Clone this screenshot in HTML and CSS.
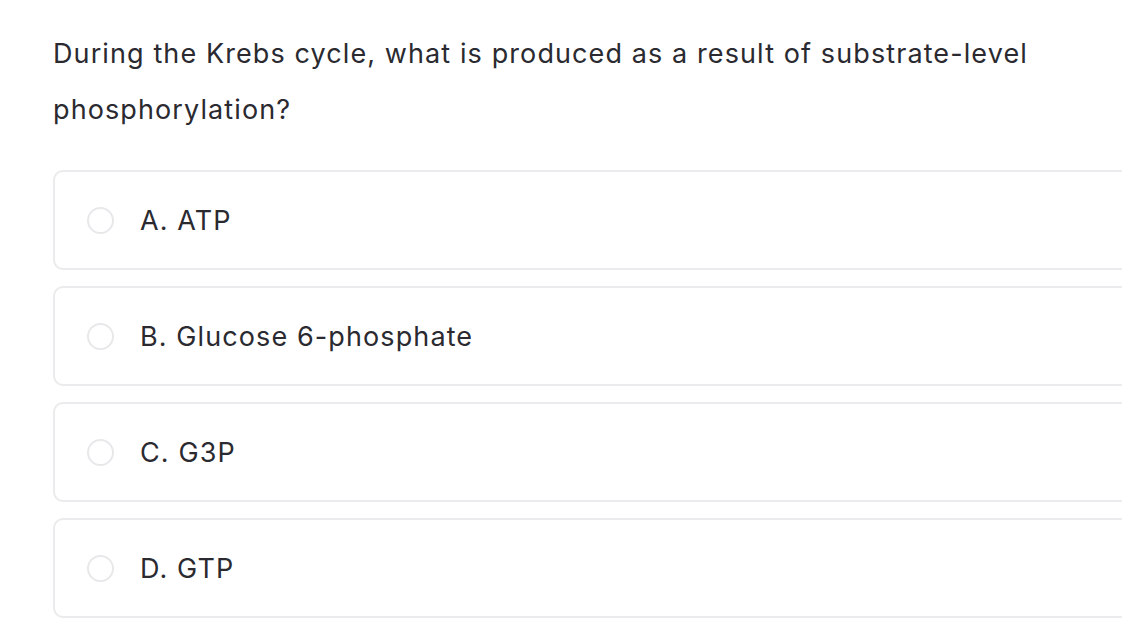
FILE: index.html
```html
<!DOCTYPE html>
<html>
<head>
<meta charset="utf-8">
<link rel="stylesheet" href="styles.css">
</head>
<body>
<div class="quiz">
  <p class="question">During the Krebs cycle, what is produced as a result of substrate-level phosphorylation?</p>
  <div class="options">
    <label class="option"><span class="radio"></span><span class="text">A. ATP</span></label>
    <label class="option"><span class="radio"></span><span class="text">B. Glucose 6-phosphate</span></label>
    <label class="option"><span class="radio"></span><span class="text">C. G3P</span></label>
    <label class="option"><span class="radio"></span><span class="text">D. GTP</span></label>
  </div>
</div>
</body>
</html>
```
FILE: styles.css
```css
html, body {
  margin: 0;
  padding: 0;
  background: #ffffff;
  overflow: hidden;
}
body {
  font-family: "Inter", "Liberation Sans", sans-serif;
  color: #2a2a30;
}
.quiz {
  padding: 26px 0 0 53px;
  margin-right: -30px;
}
.question {
  margin: 0;
  font-size: 27px;
  line-height: 56px;
  letter-spacing: 1.1px;
  width: 1000px;
}
.options {
  margin-top: 32px;
  display: flex;
  flex-direction: column;
  gap: 16px;
}
.option {
  box-sizing: border-box;
  height: 100px;
  border: 2px solid #ebebed;
  border-radius: 10px;
  display: flex;
  align-items: center;
  padding-left: 32px;
}
.radio {
  box-sizing: border-box;
  width: 27px;
  height: 27px;
  border: 2px solid #e8e8eb;
  border-radius: 50%;
  flex: none;
}
.text {
  margin-left: 26px;
  font-size: 27px;
  letter-spacing: 1.1px;
}
```
